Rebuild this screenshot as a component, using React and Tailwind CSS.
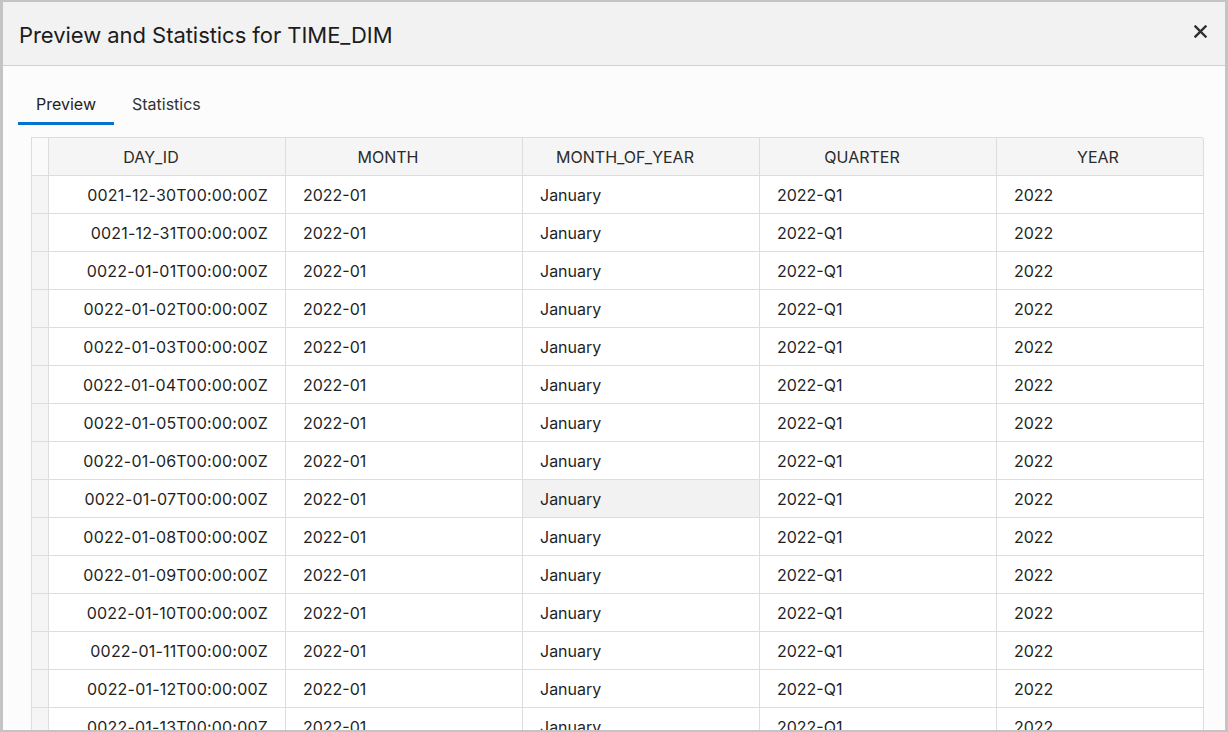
import React from "react";

const days = [
  "0021-12-30T00:00:00Z",
  "0021-12-31T00:00:00Z",
  "0022-01-01T00:00:00Z",
  "0022-01-02T00:00:00Z",
  "0022-01-03T00:00:00Z",
  "0022-01-04T00:00:00Z",
  "0022-01-05T00:00:00Z",
  "0022-01-06T00:00:00Z",
  "0022-01-07T00:00:00Z",
  "0022-01-08T00:00:00Z",
  "0022-01-09T00:00:00Z",
  "0022-01-10T00:00:00Z",
  "0022-01-11T00:00:00Z",
  "0022-01-12T00:00:00Z",
  "0022-01-13T00:00:00Z",
];

const headers = ["DAY_ID", "MONTH", "MONTH_OF_YEAR", "QUARTER", "YEAR"];

export default function App() {
  return (
    <div
      className="w-[1228px] h-[732px] overflow-hidden bg-white"
      style={{ fontFamily: "Inter, 'Liberation Sans', sans-serif" }}
    >
      <div className="w-full h-full border-l-[3px] border-t-2 border-r-[3px] border-b-2 border-[#c4c4c4] bg-[#fcfcfc] flex flex-col overflow-hidden">
        {/* Header */}
        <div className="h-[64px] shrink-0 bg-[#f2f2f2] border-b border-[#d0d0d0] flex items-center justify-between pl-4 pr-[18px] pt-[4px]">
          <div className="text-[22px] text-[#1c1c1c] tracking-[-0.05px]">Preview and Statistics for TIME_DIM</div>
          <svg width="13" height="13" viewBox="0 0 13 13" className="-mt-[8px]">
            <path d="M1.5 1.5 L11.5 11.5 M11.5 1.5 L1.5 11.5" stroke="#2e2e2e" strokeWidth="2.4" strokeLinecap="square" />
          </svg>
        </div>

        {/* Tabs */}
        <div className="flex pl-[15px] pt-[26px] shrink-0">
          <div className="px-[18px] pb-[6px] border-b-[3px] border-[#0572ce] text-[16px] text-[#222]">Preview</div>
          <div className="px-[18px] pb-[6px] border-b-[3px] border-transparent text-[16px] text-[#333]">Statistics</div>
        </div>

        {/* Table */}
        <div className="pl-[28px] pt-[12px]">
          <div className="grid grid-cols-[17px_237px_237px_237px_237px_207px] border-t border-l border-[#dddddd] w-[1172px] text-[16px] text-[#1f1f1f]">
            <div className="h-[38px] border-r border-b border-[#dddddd] bg-[#fafafa]"></div>
            {headers.map((h, i) => (
              <div
                key={h}
                className={
                  i < 4
                    ? "h-[38px] border-r border-b border-[#dddddd] bg-[#f5f5f5] flex items-center justify-center pr-[32px] text-[#2a2a2a]"
                    : "h-[38px] border-r border-b border-[#dddddd] bg-[#f5f5f5] flex items-center justify-center pr-[4px] text-[#2a2a2a]"
                }
              >
                {h}
              </div>
            ))}
            {days.map((d, r) => (
              <React.Fragment key={d}>
                <div className="h-[38px] border-r border-b border-[#dddddd] bg-[#f5f5f5]"></div>
                <div className="h-[38px] border-r border-b border-[#dddddd] bg-white flex items-center justify-end pr-[17px] tracking-[0.2px]">{d}</div>
                <div className="h-[38px] border-r border-b border-[#dddddd] bg-white flex items-center pl-[17px]">2022-01</div>
                <div
                  className={
                    r === 8
                      ? "h-[38px] border-r border-b border-[#dddddd] bg-[#f2f2f2] flex items-center pl-[17px]"
                      : "h-[38px] border-r border-b border-[#dddddd] bg-white flex items-center pl-[17px]"
                  }
                >
                  January
                </div>
                <div className="h-[38px] border-r border-b border-[#dddddd] bg-white flex items-center pl-[17px]">2022-Q1</div>
                <div className="h-[38px] border-r border-b border-[#dddddd] bg-white flex items-center pl-[17px]">2022</div>
              </React.Fragment>
            ))}
          </div>
        </div>
      </div>
    </div>
  );
}
